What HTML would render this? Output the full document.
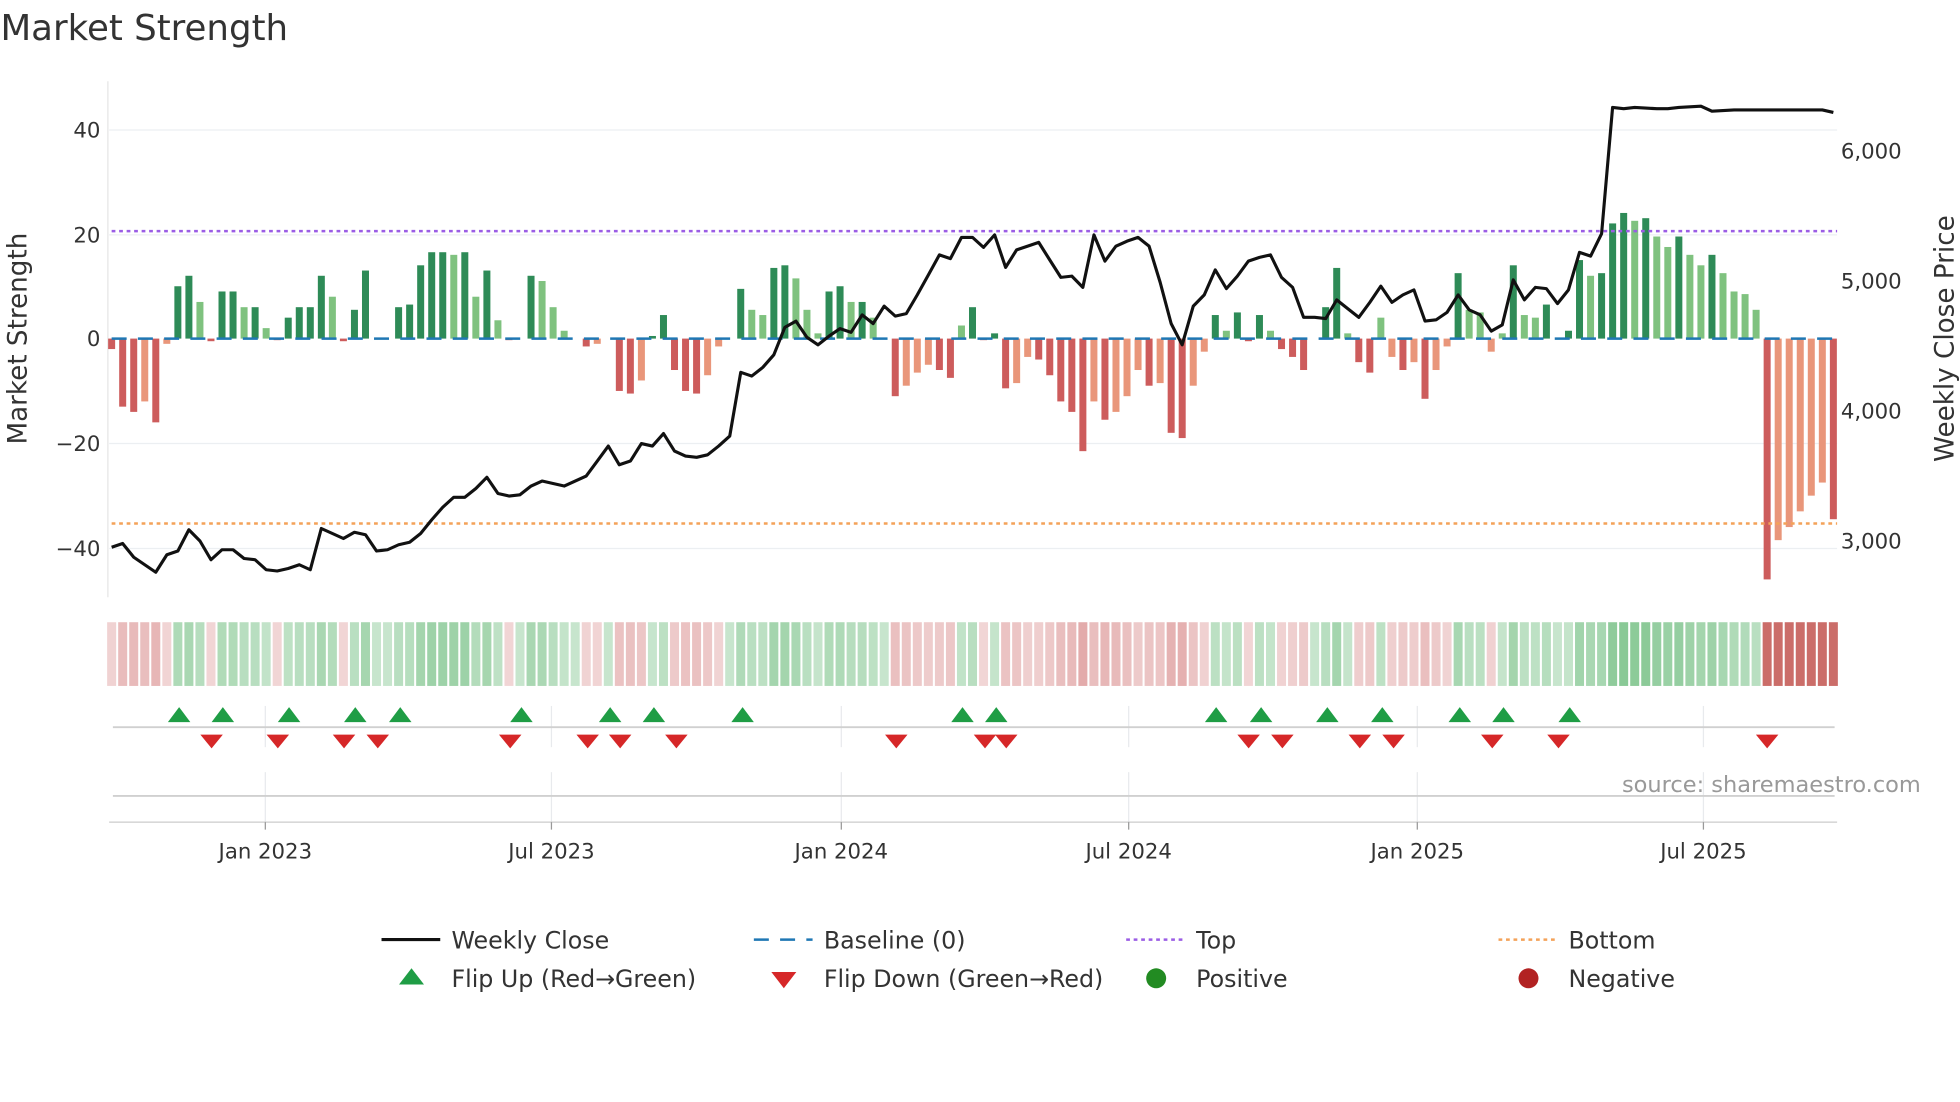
<!DOCTYPE html>
<html><head><meta charset="utf-8"><style>
html,body{margin:0;padding:0;background:#fff;}
svg{display:block;font-family:"DejaVu Sans","Liberation Sans",sans-serif;}
</style></head><body>
<svg id="s" width="1960" height="1102" viewBox="0 0 1568 882" xmlns="http://www.w3.org/2000/svg">
<rect width="1568" height="882" fill="#fff"/>
<text x="0" y="32" font-size="28.5" fill="#333">Market Strength</text>
<g stroke="#eceff2" stroke-width="1">
<line x1="87" y1="104" x2="1470" y2="104"/><line x1="87" y1="188" x2="1470" y2="188"/>
<line x1="87" y1="355" x2="1470" y2="355"/><line x1="87" y1="439" x2="1470" y2="439"/>
</g>
<line x1="86" y1="65" x2="86" y2="478" stroke="#e6e6e6"/>
<g font-size="17" fill="#333" text-anchor="end">
<text x="80" y="110">40</text><text x="80" y="194">20</text><text x="80" y="277">0</text>
<text x="80" y="361">−20</text><text x="80" y="445">−40</text>
</g>
<g font-size="17" fill="#333">
<text x="1473" y="127">6,000</text><text x="1473" y="231">5,000</text>
<text x="1473" y="335">4,000</text><text x="1473" y="439">3,000</text>
</g>
<text transform="translate(21,271) rotate(-90)" font-size="21" fill="#333" text-anchor="middle">Market Strength</text>
<text transform="translate(1563,271) rotate(-90)" font-size="21" fill="#333" text-anchor="middle">Weekly Close Price</text>
<g id="bars"></g>
<line x1="89" y1="271" x2="1470" y2="271" stroke="#1f77b4" stroke-width="2" stroke-dasharray="12,9"/>
<line x1="89" y1="185" x2="1470" y2="185" stroke="#9b5de5" stroke-width="2" stroke-dasharray="3,3"/>
<line x1="89" y1="419" x2="1470" y2="419" stroke="#f4a259" stroke-width="2" stroke-dasharray="3,3"/>
<polyline id="price" fill="none" stroke="#111" stroke-width="2.5" stroke-linejoin="round"/>
<g id="strip"></g>
<g stroke="#e8eaed" stroke-width="1">
<line x1="212" y1="565" x2="212" y2="598"/><line x1="441" y1="565" x2="441" y2="598"/>
<line x1="673" y1="565" x2="673" y2="598"/><line x1="903" y1="565" x2="903" y2="598"/>
<line x1="1134" y1="565" x2="1134" y2="598"/><line x1="1363" y1="565" x2="1363" y2="598"/>
<line x1="212" y1="618" x2="212" y2="660"/><line x1="441" y1="618" x2="441" y2="660"/>
<line x1="673" y1="618" x2="673" y2="660"/><line x1="903" y1="618" x2="903" y2="660"/>
<line x1="1134" y1="618" x2="1134" y2="660"/><line x1="1363" y1="618" x2="1363" y2="660"/>
</g>
<line x1="90" y1="582" x2="1468" y2="582" stroke="#d0d0d0" stroke-width="1.5"/>
<line x1="90" y1="637" x2="1468" y2="637" stroke="#d0d0d0" stroke-width="1.5"/>
<line x1="87" y1="658" x2="1470" y2="658" stroke="#ccc" stroke-width="1"/>
<g stroke="#999"><line x1="212" y1="658" x2="212" y2="664"/><line x1="441" y1="658" x2="441" y2="664"/><line x1="673" y1="658" x2="673" y2="664"/><line x1="903" y1="658" x2="903" y2="664"/><line x1="1134" y1="658" x2="1134" y2="664"/><line x1="1363" y1="658" x2="1363" y2="664"/></g>
<g id="marks"></g>
<text x="1537" y="634" font-size="18" fill="#999" text-anchor="end">source: sharemaestro.com</text>
<g font-size="17" fill="#333" text-anchor="middle">
<text x="212" y="687">Jan 2023</text><text x="441" y="687">Jul 2023</text><text x="673" y="687">Jan 2024</text>
<text x="903" y="687">Jul 2024</text><text x="1134" y="687">Jan 2025</text><text x="1363" y="687">Jul 2025</text>
</g>
<g font-size="19" fill="#333">
<line x1="305" y1="752" x2="352" y2="752" stroke="#111" stroke-width="2.5"/><text x="361" y="759">Weekly Close</text>
<line x1="603" y1="752" x2="650" y2="752" stroke="#1f77b4" stroke-width="2" stroke-dasharray="12,9"/><text x="659" y="759">Baseline (0)</text>
<line x1="901" y1="752" x2="948" y2="752" stroke="#9b5de5" stroke-width="2" stroke-dasharray="3,3"/><text x="957" y="759">Top</text>
<line x1="1199" y1="752" x2="1246" y2="752" stroke="#f4a259" stroke-width="2" stroke-dasharray="3,3"/><text x="1255" y="759">Bottom</text>
<polygon points="319,788 339,788 329,775" fill="#1f9d45"/><text x="361" y="790">Flip Up (Red→Green)</text>
<polygon points="617,778 637,778 627,791" fill="#d62728"/><text x="659" y="790">Flip Down (Green→Red)</text>
<circle cx="925" cy="783" r="8" fill="#228b22"/><text x="957" y="790">Positive</text>
<circle cx="1223" cy="783" r="8" fill="#b22222"/><text x="1255" y="790">Negative</text>
</g>
</svg>
<script>
var v=[-2,-13,-14,-12,-16,-1,10,12,7,-0.5,9,9,6,6,2,-0.3,4,6,6,12,8,-0.5,5.5,13,0,0,6,6.5,14,16.5,16.5,16,16.5,8,13,3.5,-0.3,0,12,11,6,1.5,0,-1.5,-1,0,-10,-10.5,-8,0.5,4.5,-6,-10,-10.5,-7,-1.5,0,9.5,5.5,4.5,13.5,14,11.5,5.5,1,9,10,7,7,4,0,-11,-9,-6.5,-5,-6,-7.5,2.5,6,-0.3,1,-9.5,-8.5,-3.5,-4,-7,-12,-14,-21.5,-12,-15.5,-14,-11,-6,-9,-8.5,-18,-19,-9,-2.5,4.5,1.5,5,-0.5,4.5,1.5,-2,-3.5,-6,0,6,13.5,1,-4.5,-6.5,4,-3.5,-6,-4.5,-11.5,-6,-1.5,12.5,5.5,5,-2.5,1,14,4.5,4,6.5,0,1.5,15,12,12.5,22,24,22.5,23,19.5,17.5,19.5,16,14,16,12.5,9,8.5,5.5,-46,-38.5,-36,-33,-30,-27.5,-34.5];
var n=v.length,x0=89,step=(1467-89)/(n-1),NS="http://www.w3.org/2000/svg";
var bars=document.getElementById('bars'),strip=document.getElementById('strip');
function el(p,t,a){var e=document.createElementNS(NS,t);for(var k in a)e.setAttribute(k,a[k]);p.appendChild(e);}
for(var i=0;i<n;i++){var x=x0+i*step,val=v[i],prev=i?v[i-1]:0;
 var strong=Math.abs(val)>=Math.abs(prev)||Math.abs(val)<1;
 var c=val>=0?(strong?'#2e8b57':'#7fc27f'):(strong?'#cd5c5c':'#e9967a');
 var h=Math.abs(val)*4.19,y=val>=0?271-h:271;
 if(h>0.5)el(bars,'rect',{x:x-2.8,y:y,width:5.6,height:h,fill:c});
 var a=Math.min(Math.abs(val)/25,1);
 var sc=val>=0?'rgba(70,170,90,'+(0.3+0.35*a)+')':(val<-25?'rgba(185,60,55,0.75)':'rgba(200,90,90,'+(0.25+0.3*a)+')');
 el(strip,'rect',{x:x-3.6,y:498,width:7.2,height:51,fill:sc});}
var p=[438,435,446,452,458,444,441,424,433,448,440,440,447,448,456,457,455,452,456,423,427,431,426,428,441,440,436,434,427,416,406,398,398,391,382,395,397,396,389,385,387,389,385,381,369,357,372,369,355,357,347,361,365,366,364,357,349,298,301,294,284,262,257,270,276,269,263,266,252,259,245,253,251,236,220,204,207,190,190,198,188,214,200,197,194,208,222,221,230,188,209,197,193,190,197,226,259,276,245,236,216,231,221,209,206,204,222,230,254,254,255,240,247,254,242,229,242,236,232,257,256,250,236,248,252,265,260,224,240,230,231,243,232,202,205,187,86,87,86,86.5,87,87,86,85.5,85,89,88.5,88,88,88,88,88,88,88,88,88,90];
var pts=[];for(var i=0;i<p.length;i++){var px=Math.min(x0+i*step,1467);pts.push(px.toFixed(1)+','+p[i]);}
document.getElementById('price').setAttribute('points',pts.join(' '));
var m=document.getElementById('marks');
[143,178,231,284,320,417,488,523,594,770,797,973,1009,1062,1106,1168,1203,1256].forEach(function(x){el(m,'polygon',{points:(x-9)+',578 '+(x+9)+',578 '+x+',566',fill:'#1f9d45'});});
[169,222,275,302,408,470,496,541,717,788,805,999,1026,1088,1115,1194,1247,1414].forEach(function(x){el(m,'polygon',{points:(x-9)+',588 '+(x+9)+',588 '+x+',599',fill:'#d62728'});});
</script>
</body></html>
